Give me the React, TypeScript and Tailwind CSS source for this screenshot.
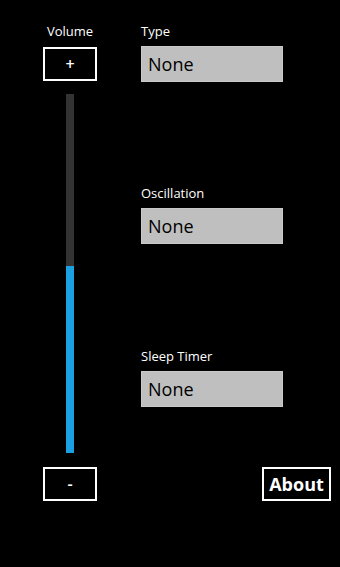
export default function App() {
    const volume = 0.52;

    return (
        <div
            className="w-[340px] h-[567px] bg-black text-white flex overflow-hidden"
            style={{ fontFamily: '"Open Sans", "Noto Sans", sans-serif' }}
        >
            {/* Volume column */}
            <div className="w-[54px] ml-[43px] pt-[23px] flex flex-col items-center">
                <div className="text-[13px] leading-[16px] h-[16px]">Volume</div>
                <button className="mt-[8px] w-[54px] h-[34px] border-2 border-white flex items-center justify-center text-[16px] font-semibold">
                    +
                </button>
                <div className="mt-[13px] w-[8px] h-[359px] bg-[#333333] flex flex-col justify-end">
                    <div className="w-full bg-[#1ba1e2]" style={{ height: `${volume * 100}%` }} />
                </div>
                <button className="mt-[14px] w-[54px] h-[34px] border-2 border-white flex items-center justify-center text-[16px] font-semibold">
                    -
                </button>
            </div>

            {/* Settings column */}
            <div className="ml-[44px] w-[190px] pt-[23px] flex flex-col">
                <div className="text-[13px] leading-[16px] h-[16px]">Type</div>
                <div className="mt-[7px] w-[142px] h-[36px] bg-[#bfbfbf] border border-[#c9c9c9] text-black text-[18px] flex items-center pl-[6px]">
                    None
                </div>

                <div className="mt-[103px] text-[13px] leading-[16px] h-[16px]">Oscillation</div>
                <div className="mt-[7px] w-[142px] h-[36px] bg-[#bfbfbf] border border-[#c9c9c9] text-black text-[18px] flex items-center pl-[6px]">
                    None
                </div>

                <div className="mt-[104px] text-[13px] leading-[16px] h-[16px]">Sleep Timer</div>
                <div className="mt-[7px] w-[142px] h-[36px] bg-[#bfbfbf] border border-[#c9c9c9] text-black text-[18px] flex items-center pl-[6px]">
                    None
                </div>

                <div className="mt-[60px] flex justify-end">
                    <button className="w-[69px] h-[34px] border-2 border-white flex items-center justify-center text-[18px] font-bold">
                        About
                    </button>
                </div>
            </div>
        </div>
    );
}
